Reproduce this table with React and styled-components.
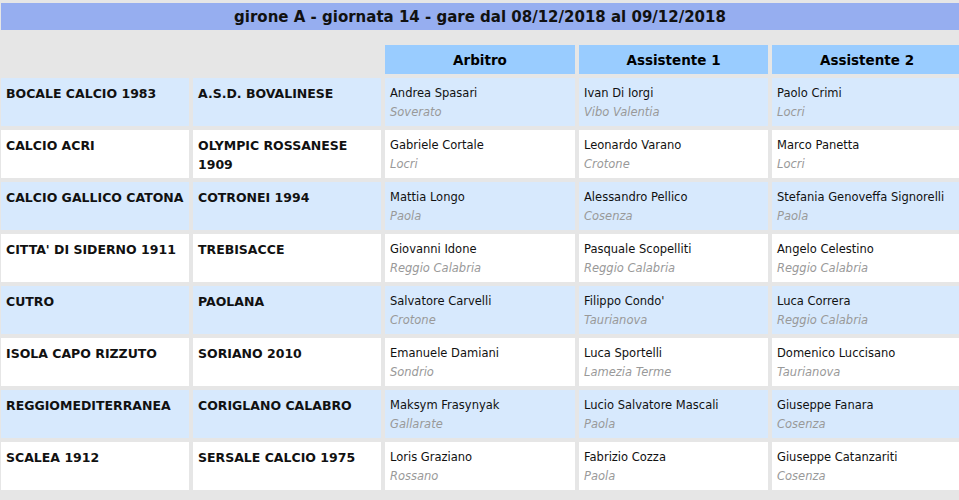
import React from 'react';
import styled, { createGlobalStyle } from 'styled-components';

const GlobalStyle = createGlobalStyle`
    html, body {
        margin: 0;
        padding: 0;
        background: #e6e6e6;
        overflow: hidden;
    }
    body {
        font-family: "DejaVu Sans", Verdana, sans-serif;
        color: #000;
    }
`;

const Page = styled.div`
    padding: 3px 0 0 1px;
    width: 980px;
`;

const TitleBar = styled.div`
    background: #96aef0;
    height: 27px;
    display: flex;
    align-items: center;
    justify-content: center;
    width: 958px;
    font-size: 15px;
    font-weight: 700;
    color: #111;
`;

const Grid = styled.div`
    display: grid;
    grid-template-columns: 188px 188px 190px 189px 190px;
    grid-template-rows: 29px repeat(8, 48px);
    gap: 4px;
    margin-top: 15px;
`;

const Head = styled.div`
    background: ${p => (p.$blank ? 'transparent' : '#99ccff')};
    display: flex;
    align-items: center;
    justify-content: center;
    font-size: 13.5px;
    font-weight: 700;
`;

const Cell = styled.div`
    background: ${p => (p.$alt ? '#d7e9fd' : '#ffffff')};
    padding: 6px 5px 0 5px;
    box-sizing: border-box;
    line-height: 19px;
`;

const Team = styled.div`
    font-size: 12.5px;
    font-weight: 700;
    color: #111;
`;

const Name = styled.div`
    font-size: 11.5px;
    color: #111;
`;

const City = styled.div`
    font-size: 11.5px;
    font-style: italic;
    color: #999;
`;

const matches = [
    ['BOCALE CALCIO 1983', 'A.S.D. BOVALINESE', ['Andrea Spasari', 'Soverato'], ['Ivan Di Iorgi', 'Vibo Valentia'], ['Paolo Crimi', 'Locri']],
    ['CALCIO ACRI', 'OLYMPIC ROSSANESE 1909', ['Gabriele Cortale', 'Locri'], ['Leonardo Varano', 'Crotone'], ['Marco Panetta', 'Locri']],
    ['CALCIO GALLICO CATONA', 'COTRONEI 1994', ['Mattia Longo', 'Paola'], ['Alessandro Pellico', 'Cosenza'], ['Stefania Genoveffa Signorelli', 'Paola']],
    ["CITTA' DI SIDERNO 1911", 'TREBISACCE', ['Giovanni Idone', 'Reggio Calabria'], ['Pasquale Scopelliti', 'Reggio Calabria'], ['Angelo Celestino', 'Reggio Calabria']],
    ['CUTRO', 'PAOLANA', ['Salvatore Carvelli', 'Crotone'], ["Filippo Condo'", 'Taurianova'], ['Luca Correra', 'Reggio Calabria']],
    ['ISOLA CAPO RIZZUTO', 'SORIANO 2010', ['Emanuele Damiani', 'Sondrio'], ['Luca Sportelli', 'Lamezia Terme'], ['Domenico Luccisano', 'Taurianova']],
    ['REGGIOMEDITERRANEA', 'CORIGLANO CALABRO', ['Maksym Frasynyak', 'Gallarate'], ['Lucio Salvatore Mascali', 'Paola'], ['Giuseppe Fanara', 'Cosenza']],
    ['SCALEA 1912', 'SERSALE CALCIO 1975', ['Loris Graziano', 'Rossano'], ['Fabrizio Cozza', 'Paola'], ['Giuseppe Catanzariti', 'Cosenza']],
];

const App = () => (
    <>
        <GlobalStyle />
        <Page>
            <TitleBar>girone A - giornata 14 - gare dal 08/12/2018 al 09/12/2018</TitleBar>
            <Grid>
                <Head $blank />
                <Head $blank />
                <Head>Arbitro</Head>
                <Head>Assistente 1</Head>
                <Head>Assistente 2</Head>
                {matches.map((m, i) => {
                    const alt = i % 2 === 0;
                    return (
                        <React.Fragment key={i}>
                            <Cell $alt={alt}><Team>{m[0]}</Team></Cell>
                            <Cell $alt={alt}><Team>{m[1]}</Team></Cell>
                            {m.slice(2).map(([name, city], j) => (
                                <Cell $alt={alt} key={j}>
                                    <Name>{name}</Name>
                                    <City>{city}</City>
                                </Cell>
                            ))}
                        </React.Fragment>
                    );
                })}
            </Grid>
        </Page>
    </>
);

export default App;
